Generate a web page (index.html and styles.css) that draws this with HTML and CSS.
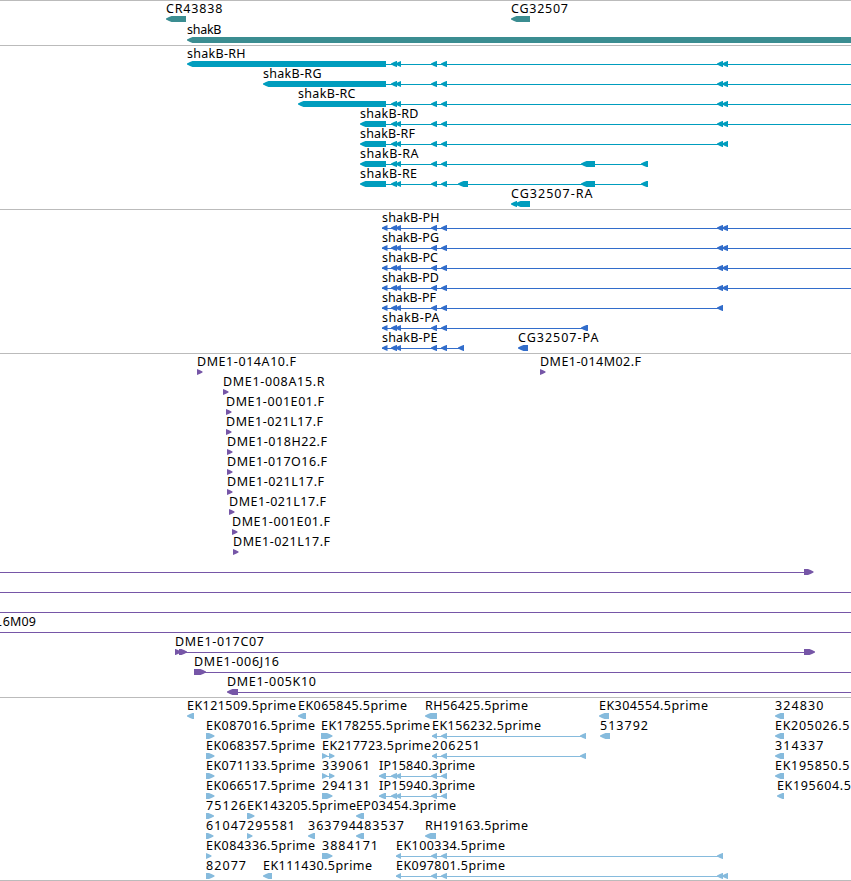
FILE: index.html
```html
<!DOCTYPE html>
<html lang="en">
<head>
<meta charset="utf-8">
<title>Genome tracks</title>
<link rel="stylesheet" href="styles.css">
</head>
<body>
<main class="browser" id="browser"></main>
<script src="tracks.js"></script>
</body>
</html>
```
FILE: styles.css
```css
body {
  margin: 0;
  background: #fff;
  overflow: hidden;
}

.browser {
  width: 851px;
  border-top: 1px solid #bbb;
}

.track {
  display: flex;
  flex-direction: column;
  padding-bottom: 3px;
  border-bottom: 1px solid #bbb;
}

.track:last-child {
  padding-bottom: 2px;
}

.row {
  display: block;
  width: 851px;
  height: 20px;
  flex: none;
  overflow: visible;
}

.label {
  font-family: "Noto Sans", "Open Sans", sans-serif;
  font-size: 12.5px;
  fill: #000;
}

.serif-one {
  font-family: "DejaVu Sans", sans-serif;
}

.gene { fill: #3b8d91; gap: 1px; }
.transcript { fill: #009dbe; }
.protein { fill: #326dcb; }
.clone { fill: #7656a7; }
.est { fill: #86bbdd; }
```
FILE: tracks.js
```js
// Labels: [text, x, width]. Lines: [from, to].
// Features: [from, to], with a third value of 1 when pointing right.
const W = 851;
const near = [[391, 397], [395.5, 401], [431, 437], [441, 447]];
const far = [[717, 723], [722, 728]];
const row = (labels, features = [], lines = []) => ({ labels, features, lines });

const transcript = (name, x, width, extra, end) =>
  row([["shakB-" + name, x, width]], [[x, 386], ...near, ...extra], [[386, end]]);
const protein = (name, width, extra, end) =>
  row([["shakB-" + name, 382, width]], [[382, 387.5], ...near, ...extra], [[382, end]]);
const read = (name, x, width) => row([[name, x, width]], [[x, x + 5.5, 1]]);

const proteinPE = protein("PE", 55.5, [[458, 464]], 464);
proteinPE.labels.push(["CG32507-PA", 518, 80.5]);
proteinPE.features.push([518, 528]);

const firstRead = read("DME1-014A10.F", 197, 99);
firstRead.labels.push(["DME1-014M02.F", 540, 101]);
firstRead.features.push([540, 545.5, 1]);

const spliced = [[432, 437], [441, 447], [580, 586]];
const ip = [[379, 386], ...near];

const tracks = [
  ["gene", [
    row([["CR43838", 166, 56.5], ["CG32507", 511, 57]], [[166, 186], [511, 530]]),
    row([["shakB", 187, 34.5]], [[187, W]])
  ]],
  ["transcript", [
    transcript("RH", 187, 58.5, far, W),
    transcript("RG", 263, 58.5, far, W),
    transcript("RC", 298, 57.5, far, W),
    transcript("RD", 360, 58.5, far, W),
    transcript("RF", 360, 55, far, 728),
    transcript("RA", 360, 58.5, [[581, 595], [641, 648]], 648),
    transcript("RE", 360, 57, [[458, 468], [581, 595], [641, 648]], 648),
    row([["CG32507-RA", 511, 81.5]], [[511, 517], [515, 530]])
  ]],
  ["protein", [
    protein("PH", 57.5, far, W),
    protein("PG", 57, far, W),
    protein("PC", 56, far, W),
    protein("PD", 57, far, W),
    protein("PF", 54, [[717, 723]], 723),
    protein("PA", 57.5, [[581, 588]], 588),
    proteinPE
  ]],
  ["clone", [
    firstRead,
    read("DME1-008A15.R", 223, 101.5),
    read("DME1-001E01.F", 226, 98),
    read("DME1-021L17.F", 226, 97),
    read("DME1-018H22.F", 227, 100),
    read("DME1-017O16.F", 227, 100),
    read("DME1-021L17.F", 227, 97),
    read("DME1-021L17.F", 229, 97),
    read("DME1-001E01.F", 232, 98),
    read("DME1-021L17.F", 233, 97),
    row([], [[804, 813.5, 1]], [[0, 810]]),
    row([], [], [[0, W]]),
    row([], [], [[0, W]]),
    row([["<tspan class='serif-one'>1</tspan>6M09", -5.5, 41.5]], [], [[0, W]]),
    row([["DME1-017C07", 175, 89]], [[175, 181, 1], [179, 187, 1], [804, 815, 1]], [[180, 812]]),
    row([["DME1-006J16", 194, 85]], [[194, 206, 1]], [[200, W]]),
    row([["DME1-005K10", 227, 89]], [[227, 238]], [[235, W]])
  ]],
  ["est", [
    row([["EK121509.5prime", 187, 109], ["EK065845.5prime", 298, 109], ["RH56425.5prime", 425, 103], ["EK304554.5prime", 599, 109], ["324830", 775, 48.5]],
      [[187, 194], [298, 306], [425, 437], [599, 609], [775, 784]]),
    row([["EK087016.5prime", 206, 109], ["EK178255.5prime", 321, 109], ["EK156232.5prime", 432, 109], ["513792", 600, 48], ["EK205026.5", 775, 74.5]],
      [[206, 214.5, 1], [321, 332.5, 1], ...spliced, [600, 610], [775, 784]], [[432, 586]]),
    row([["EK068357.5prime", 206, 109], ["EK217723.5prime", 322, 109], ["206251", 432, 48], ["314337", 775, 48.5]],
      [[206, 214.5, 1], [322, 327.5, 1], [329, 334.5, 1], ...spliced, [775, 784]], [[322, 332], [432, 586]]),
    row([["EK071133.5prime", 206, 109], ["339061", 322, 48], ["IP15840.3prime", 379, 96], ["EK195850.5", 775, 74.5]],
      [[206, 214.5, 1], [322, 327.5, 1], [329, 334.5, 1], ...ip, [775, 784]], [[322, 332], [379, 447]]),
    row([["EK066517.5prime", 206, 109], ["294131", 322, 48], ["IP15940.3prime", 379, 96], ["EK195604.5", 777, 74]],
      [[206, 214.5, 1], [322, 332.5, 1], ...ip, [777, 784]], [[379, 447]]),
    row([["75126", 206, 40], ["EK143205.5prime", 247, 109], ["EP03454.3prime", 356, 100]],
      [[206, 214, 1], [247, 254.5, 1], [356, 364]]),
    row([["61047", 206, 40], ["295581", 247, 48], ["363794", 308, 48], ["483537", 356, 48], ["RH19163.5prime", 425, 103]],
      [[206, 213.5, 1], [247, 252.5, 1], [308, 315], [356, 364], [425, 436]]),
    row([["EK084336.5prime", 206, 109], ["3884171", 322, 56], ["EK100334.5prime", 396, 109]],
      [[206, 211.5, 1], [322, 332.5, 1], [396, 401], [431, 437], [441, 447], [717, 723]], [[396, 723]]),
    row([["82077", 206, 40], ["EK111430.5prime", 263, 109], ["EK097801.5prime", 396, 109]],
      [[206, 214.5, 1], [263, 272], [396, 401], [431, 437], [441, 447], ...far], [[396, 728]])
  ]]
];

function arrow([from, to, right]) {
  const s = right ? -1 : 1;
  const tip = right ? to : from;
  const back = right ? from : to;
  const head = Math.min(5.5, to - from);
  return `<polygon points="${tip},17.4 ${tip + s * head * 0.55},15.9 ${tip + s * head},15 ${back},15 ${back},21 ${tip + s * head},21 ${tip + s * head * 0.55},20 ${tip},18.5"/>`;
}

function drawRow(r) {
  const lines = r.lines.map(([a, b]) => `<rect x="${a}" y="18" width="${b - a}" height="1"/>`);
  const labels = r.labels.map(([text, x, width]) =>
    `<text class="label" x="${x}" y="12" textLength="${width}">${text}</text>`);
  return `<svg class="row" viewBox="0 0 ${W} 20">${lines.join("")}${r.features.map(arrow).join("")}${labels.join("")}</svg>`;
}

// Feature glyphs reach one pixel past the row box.
document.getElementById("browser").innerHTML = tracks.map(([type, rows]) =>
  `<section class="track ${type}">${rows.map(drawRow).join("")}</section>`).join("");
```
